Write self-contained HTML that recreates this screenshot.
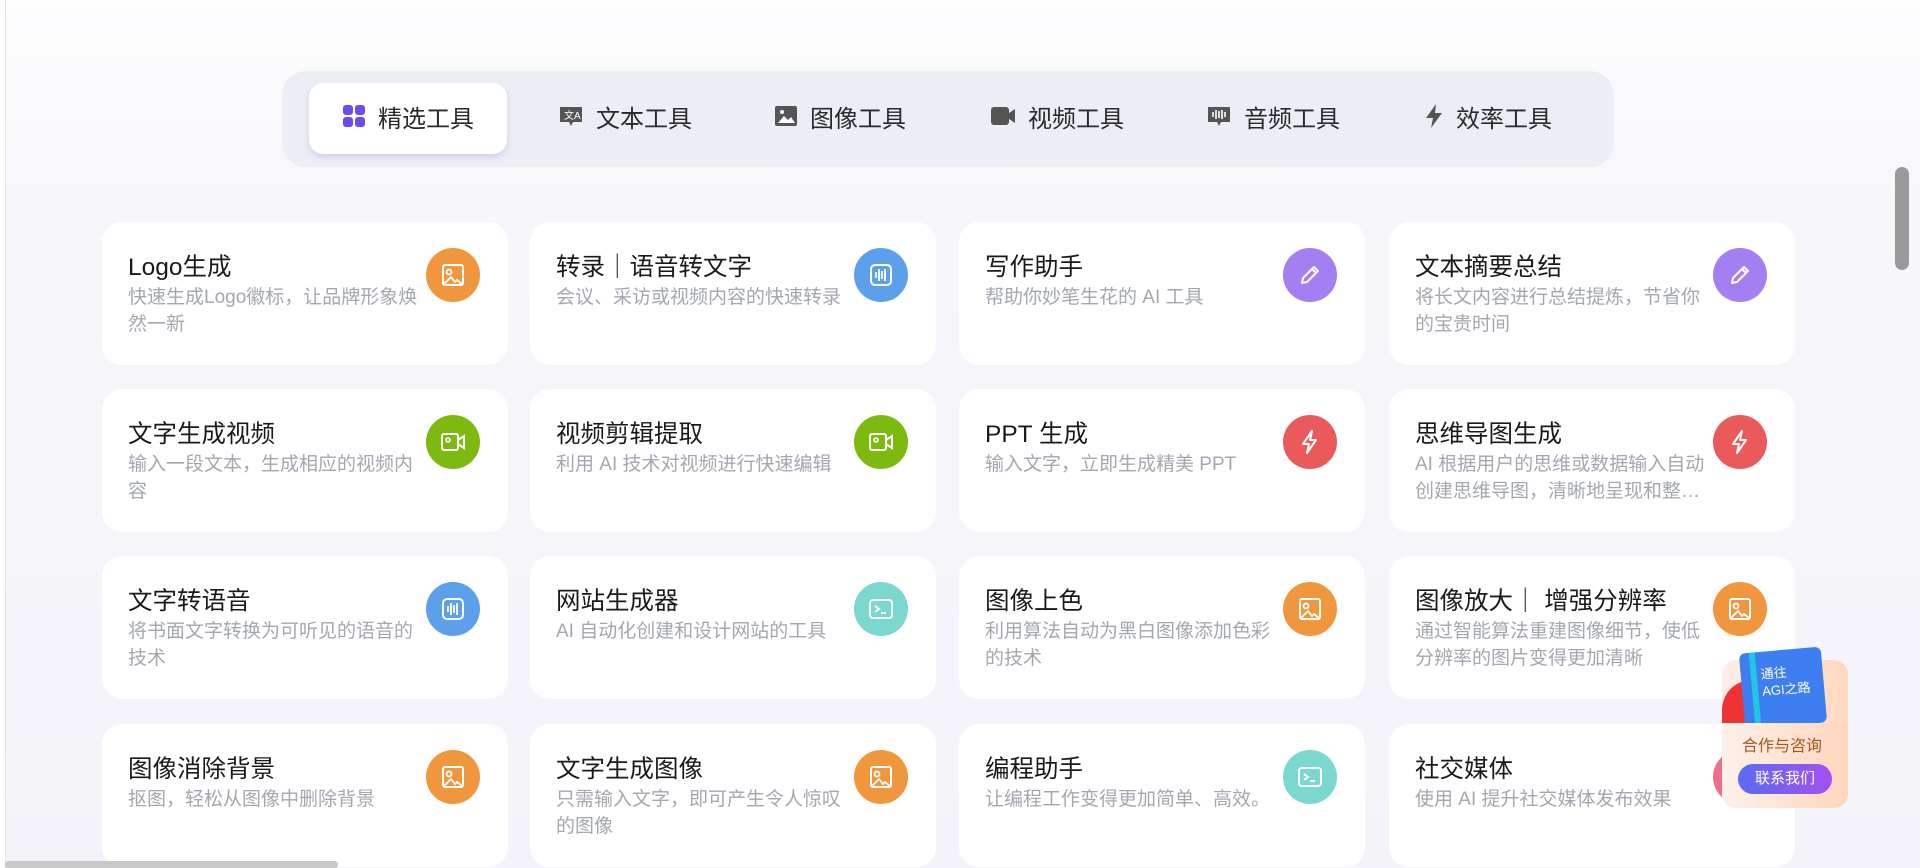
<!DOCTYPE html>
<html><head><meta charset="utf-8"><style>
*{margin:0;padding:0;box-sizing:border-box}
html,body{width:1920px;height:868px;overflow:hidden}
body{font-family:"Liberation Sans","Noto Sans CJK SC",sans-serif;background:linear-gradient(#fdfdfe 0,#f7f7fb 200px,#f3f3f9 868px);position:relative}
.lb{position:absolute;left:0;top:0;width:6px;height:868px;background:#fff;border-right:1px solid #e4e4e8}
.tabs{position:absolute;left:282px;top:71px;width:1332px;height:96px;border-radius:24px;background:#eceef6}
.act{position:absolute;left:27px;top:12px;width:198px;height:71px;border-radius:14px;background:#fff;box-shadow:0 3px 6px rgba(120,110,190,.25)}
.tab{position:absolute;top:30px;height:30px;display:flex;align-items:center;font-size:24px;color:#2a2a2a}
.tab svg{margin-right:12px}
.card{position:absolute;width:406px;height:143px;background:#fff;border-radius:20px}
.card h3{position:absolute;left:26px;top:26px;font-size:24.5px;font-weight:normal;color:#1a1a1a;white-space:nowrap}
.card p{position:absolute;left:26px;top:62px;width:296px;font-size:19px;line-height:27px;color:#a3a7b0;overflow:hidden;max-height:54px}
.ic{position:absolute;left:324px;top:26px;width:54px;height:54px;border-radius:50%;display:flex;align-items:center;justify-content:center}
.sb{position:absolute;left:1895px;top:167px;width:14px;height:103px;border-radius:7px;background:#9a9a9a}
.hs{position:absolute;left:5px;top:861px;width:333px;height:7px;border-radius:3px;background:#c9c9c9}
.w{position:absolute;left:1722px;top:660px;width:126px;height:148px;border-radius:14px;background:linear-gradient(90deg,#fdeee8,#ffd9c0)}
</style></head><body>
<div class="lb"></div>
<div class="tabs">
<div class="act"></div>
<div class="tab" style="left:60px"><svg width="24" height="24" viewBox="0 0 24 24" fill="#6a4df0"><rect x="1" y="1" width="10" height="10" rx="3"/><rect x="13" y="1" width="10" height="10" rx="3"/><rect x="1" y="13" width="10" height="10" rx="3"/><rect x="13" y="13" width="10" height="10" rx="3"/></svg>精选工具</div>
<div class="tab" style="left:276px"><svg width="26" height="24" viewBox="0 0 26 24"><path d="M2 3h22v15H15l-2 4-2-4H2z" fill="#555"/><text x="6" y="15" font-size="10" fill="#fff" font-family="Liberation Sans">文A</text></svg>文本工具</div>
<div class="tab" style="left:492px"><svg width="24" height="22" viewBox="0 0 24 22"><rect x="1" y="1" width="22" height="20" rx="2" fill="#555"/><path d="M4 18l6-7 4 4 3-3 4 6z" fill="#fff"/><circle cx="8" cy="7" r="2" fill="#fff"/></svg>图像工具</div>
<div class="tab" style="left:708px"><svg width="26" height="22" viewBox="0 0 26 22" fill="#555"><rect x="1" y="2" width="18" height="18" rx="3"/><path d="M19 8l6-4v14l-6-4z"/></svg>视频工具</div>
<div class="tab" style="left:924px"><svg width="26" height="24" viewBox="0 0 26 24"><path d="M2 3h22v15H15l-2 4-2-4H2z" fill="#555"/><path d="M7 8v5M10 6v9M13 7v7M16 6v9M19 8v5" stroke="#fff" stroke-width="1.6"/></svg>音频工具</div>
<div class="tab" style="left:1142px"><svg width="20" height="26" viewBox="0 0 20 26" fill="#555"><path d="M12 1L2 15h7l-2 10 11-15h-7z"/></svg>效率工具</div>
</div>

<svg width="0" height="0" style="position:absolute">
<defs>
<g id="img"><rect x="-10" y="-10" width="20" height="20" rx="2" fill="none" stroke="#fff" stroke-width="2"/><circle cx="-4" cy="-3" r="2.5" fill="none" stroke="#fff" stroke-width="1.8"/><path d="M-9 9l7-7 4 5 2-2 5 4" fill="none" stroke="#fff" stroke-width="1.8"/></g>
<g id="aud"><rect x="-10" y="-10" width="20" height="20" rx="4" fill="none" stroke="#fff" stroke-width="2"/><path d="M-5-3v6M-2-6v12M1-4v8M4-6v12" stroke="#fff" stroke-width="1.8"/></g>
<g id="pen"><path d="M-8 8l1-5L4-8l4 4L-3 7z M2-6l4 4" fill="none" stroke="#fff" stroke-width="2" stroke-linejoin="round"/></g>
<g id="vid"><rect x="-11" y="-8" width="16" height="16" rx="2" fill="none" stroke="#fff" stroke-width="2"/><path d="M5-2l6-4v12l-6-4" fill="none" stroke="#fff" stroke-width="2"/><circle cx="-5" cy="-2" r="2" fill="none" stroke="#fff" stroke-width="1.6"/></g>
<g id="zap"><path d="M2-11L-7 2h6l-2 9 9-13h-6z" fill="none" stroke="#fff" stroke-width="2" stroke-linejoin="round"/></g>
<g id="term"><rect x="-11" y="-9" width="22" height="18" rx="3" fill="none" stroke="#fff" stroke-width="2"/><path d="M-6-3l4 3-4 3M0 4h5" fill="none" stroke="#fff" stroke-width="2"/></g>
</defs></svg>

<div class="card" style="left:102px;top:222px"><h3>Logo生成</h3><p>快速生成Logo徽标，让品牌形象焕然一新</p><div class="ic" style="background:#f0963c"><svg width="30" height="30" viewBox="-15 -15 30 30"><use href="#img"/></svg></div></div>
<div class="card" style="left:530px;top:222px"><h3>转录｜语音转文字</h3><p>会议、采访或视频内容的快速转录</p><div class="ic" style="background:#5c9feb"><svg width="30" height="30" viewBox="-15 -15 30 30"><use href="#aud"/></svg></div></div>
<div class="card" style="left:959px;top:222px"><h3>写作助手</h3><p>帮助你妙笔生花的 AI 工具</p><div class="ic" style="background:#a47ff1"><svg width="30" height="30" viewBox="-15 -15 30 30"><use href="#pen"/></svg></div></div>
<div class="card" style="left:1389px;top:222px"><h3>文本摘要总结</h3><p>将长文内容进行总结提炼，节省你的宝贵时间</p><div class="ic" style="background:#a47ff1"><svg width="30" height="30" viewBox="-15 -15 30 30"><use href="#pen"/></svg></div></div>

<div class="card" style="left:102px;top:389px"><h3>文字生成视频</h3><p>输入一段文本，生成相应的视频内容</p><div class="ic" style="background:#7cba10"><svg width="30" height="30" viewBox="-15 -15 30 30"><use href="#vid"/></svg></div></div>
<div class="card" style="left:530px;top:389px"><h3>视频剪辑提取</h3><p>利用 AI 技术对视频进行快速编辑</p><div class="ic" style="background:#7cba10"><svg width="30" height="30" viewBox="-15 -15 30 30"><use href="#vid"/></svg></div></div>
<div class="card" style="left:959px;top:389px"><h3>PPT 生成</h3><p>输入文字，立即生成精美 PPT</p><div class="ic" style="background:#eb5a5a"><svg width="30" height="30" viewBox="-15 -15 30 30"><use href="#zap"/></svg></div></div>
<div class="card" style="left:1389px;top:389px"><h3>思维导图生成</h3><p>AI 根据用户的思维或数据输入自动创建思维导图，清晰地呈现和整…</p><div class="ic" style="background:#eb5a5a"><svg width="30" height="30" viewBox="-15 -15 30 30"><use href="#zap"/></svg></div></div>

<div class="card" style="left:102px;top:556px"><h3>文字转语音</h3><p>将书面文字转换为可听见的语音的技术</p><div class="ic" style="background:#5c9feb"><svg width="30" height="30" viewBox="-15 -15 30 30"><use href="#aud"/></svg></div></div>
<div class="card" style="left:530px;top:556px"><h3>网站生成器</h3><p>AI 自动化创建和设计网站的工具</p><div class="ic" style="background:#7bd8d1"><svg width="30" height="30" viewBox="-15 -15 30 30"><use href="#term"/></svg></div></div>
<div class="card" style="left:959px;top:556px"><h3>图像上色</h3><p>利用算法自动为黑白图像添加色彩的技术</p><div class="ic" style="background:#f0963c"><svg width="30" height="30" viewBox="-15 -15 30 30"><use href="#img"/></svg></div></div>
<div class="card" style="left:1389px;top:556px"><h3>图像放大｜ 增强分辨率</h3><p>通过智能算法重建图像细节，使低分辨率的图片变得更加清晰</p><div class="ic" style="background:#f0963c"><svg width="30" height="30" viewBox="-15 -15 30 30"><use href="#img"/></svg></div></div>

<div class="card" style="left:102px;top:724px"><h3>图像消除背景</h3><p>抠图，轻松从图像中删除背景</p><div class="ic" style="background:#f0963c"><svg width="30" height="30" viewBox="-15 -15 30 30"><use href="#img"/></svg></div></div>
<div class="card" style="left:530px;top:724px"><h3>文字生成图像</h3><p>只需输入文字，即可产生令人惊叹的图像</p><div class="ic" style="background:#f0963c"><svg width="30" height="30" viewBox="-15 -15 30 30"><use href="#img"/></svg></div></div>
<div class="card" style="left:959px;top:724px"><h3>编程助手</h3><p>让编程工作变得更加简单、高效。</p><div class="ic" style="background:#7bd8d1"><svg width="30" height="30" viewBox="-15 -15 30 30"><use href="#term"/></svg></div></div>
<div class="card" style="left:1389px;top:724px"><h3>社交媒体</h3><p>使用 AI 提升社交媒体发布效果</p><div class="ic" style="background:#ec6f8e"></div></div>

<div class="w">
<div style="position:absolute;left:0;top:20px;width:30px;height:60px;border-radius:30px 0 0 0;background:conic-gradient(from 270deg at 100% 100%,#e33 0 25%,transparent 25%);"></div>
<div style="position:absolute;left:20px;top:-10px;width:82px;height:76px;border-radius:6px;background:#3d7ff0;transform:rotate(-5deg)"><div style="position:absolute;left:10px;top:0;width:6px;height:76px;background:#1fc8e0"></div><div style="position:absolute;left:20px;top:14px;color:#fff;font-size:13px;line-height:17px;font-family:'Liberation Sans','Noto Sans CJK SC',sans-serif">通往<br>AGI之路</div></div>
<div style="position:absolute;left:0;top:63px;width:126px;height:85px;border-radius:0 0 14px 14px;background:linear-gradient(90deg,#fdf0ea,#ffd6bd)"></div>
<div style="position:absolute;left:20px;top:72px;font-size:16px;color:#a05a20">合作与咨询</div>
<div style="position:absolute;left:16px;top:104px;width:94px;height:30px;border-radius:15px;background:linear-gradient(90deg,#5a6cf0,#a44ff0);color:#fff;font-size:15px;line-height:30px;text-align:center">联系我们</div>
</div>

<div class="sb"></div>
<div class="hs"></div>
</body></html>
